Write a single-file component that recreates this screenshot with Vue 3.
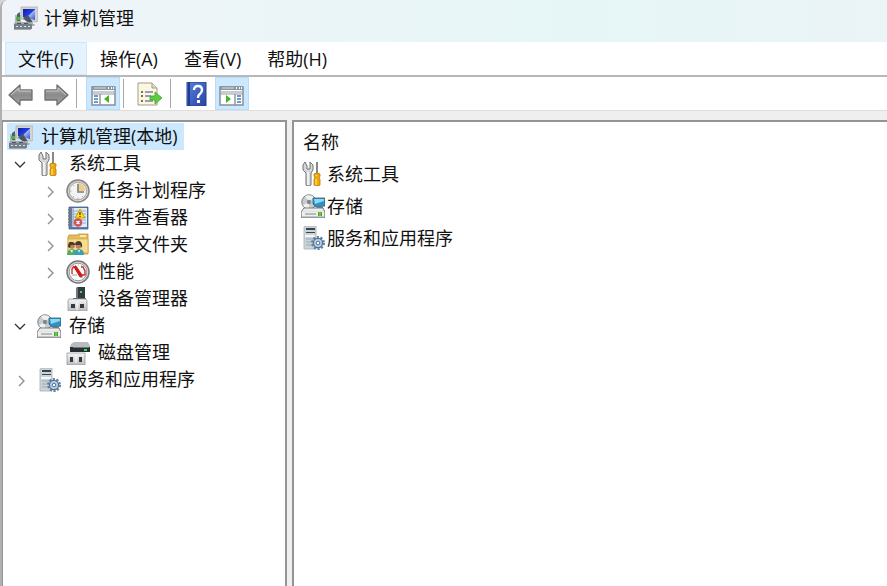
<template>
  <svg class="sprite" aria-hidden="true">
    <defs>
      <linearGradient id="g-screen" x1="0" y1="0" x2="1" y2="1">
        <stop offset="0" stop-color="#0a1ea8" />
        <stop offset="0.5" stop-color="#2440e0" />
        <stop offset="0.55" stop-color="#9fb4fa" />
        <stop offset="1" stop-color="#3450d8" />
      </linearGradient>
      <linearGradient id="g-metal" x1="0" y1="0" x2="0" y2="1">
        <stop offset="0" stop-color="#f6f6f6" />
        <stop offset="1" stop-color="#b9bcc0" />
      </linearGradient>
      <linearGradient id="g-arrow" x1="0" y1="0" x2="0" y2="1">
        <stop offset="0" stop-color="#b4b4b4" />
        <stop offset="0.5" stop-color="#8a8a8a" />
        <stop offset="1" stop-color="#a6a6a6" />
      </linearGradient>
      <linearGradient id="g-help" x1="0" y1="0" x2="1" y2="1">
        <stop offset="0" stop-color="#5c80dc" />
        <stop offset="1" stop-color="#2444a6" />
      </linearGradient>
    </defs>

    <symbol id="computer" viewBox="0 0 24 24">
      <path d="M1 9h6v8H1z" fill="#b5b9bd" />
      <path d="M3 8l3-2v9H3z" fill="#53606a" />
      <path d="M2 11h4v3H2z" fill="#4fb43c" />
      <path d="M7 1h17v14l-2 1-15-3z" fill="#d4d4cf" stroke="#aaa9a4" stroke-width=".7" />
      <path d="M9 3h12v11L9 11z" fill="url(#g-screen)" />
      <path d="M9 12l5-3 4 6v4l-6-4z" fill="#4b5663" />
      <path d="M16 16h3v2h2l-1 2h-5z" fill="#a8aaac" />
      <path d="M1 16h14l2 2v6H0v-6z" fill="#a2a7ab" />
      <path d="M0 18h18v5H0z" fill="#757f87" />
      <path d="M2 20h2v1H2zM6 20h2v1H6zM10 20h2v1h-2zM14 20h2v1h-2z" fill="#dfe4e7" />
      <path d="M3 17h4v1H3zM10 17h4v1h-4z" fill="#4d565d" />
    </symbol>

    <symbol id="tools" viewBox="0 0 24 24">
      <path d="M4 0L6 4v3h3V3l0-3 3 3v5l-2 3v12l-2 1H6l-1-1V11L2 8V3z" fill="#d5d7d8" stroke="#6e7275" stroke-width="1" />
      <path d="M7 10v13" stroke="#fafafa" stroke-width="1.500" />
      <path d="M16 0v11" stroke="#85898c" stroke-width="2" />
      <path d="M13 12q3-2 6 0v2l-1 2 1 1v6q-3 2-6 0v-6l1-1-1-2z" fill="#f0a90e" stroke="#b87503" stroke-width=".8" />
      <path d="M15 13v1M15 17v6" stroke="#ffe26b" stroke-width="1.200" />
    </symbol>

    <symbol id="clock" viewBox="0 0 24 24">
      <circle cx="12" cy="12" r="11" fill="#d3d3d3" stroke="#858585" stroke-width="1.500" />
      <circle cx="12" cy="12" r="8.700" fill="#f3f3f1" stroke="#a9a9a9" />
      <path d="M12 12V4a8 8 0 0 1 7.500 8z" fill="#f2cc8c" />
      <path d="M12 5v8h6" fill="none" stroke="#777d83" stroke-width="1.600" />
      <path d="M12 20v-1.500M4 12h1.500M7 6l1 1M7 18l1-1M17 18l-1-1" stroke="#aaa" />
    </symbol>

    <symbol id="event" viewBox="0 0 24 24">
      <path d="M3 1h19v22H3z" fill="#5f7fb2" stroke="#35517f" stroke-width=".7" />
      <path d="M6 2h15v19H6z" fill="#dfe9f5" />
      <path d="M7 5h13M7 8h13M7 11h13M7 14h13M7 17h13" stroke="#8aa7ce" stroke-width=".9" />
      <path d="M7 2v19" stroke="#7891b4" />
      <path d="M2 4h4M2 7h4M2 10h4M2 13h4M2 16h4M2 19h4" stroke="#727980" stroke-width="1.300" />
      <path d="M14 3l5 9H9z" fill="#ffd91c" stroke="#b99500" stroke-width=".8" />
      <path d="M14 6v3M14 10v1" stroke="#493d00" stroke-width="1.300" />
      <circle cx="12" cy="16.500" r="4" fill="#db4a4d" stroke="#c0626a" stroke-width=".6" />
      <path d="M10.500 15l3 3M13.500 15l-3 3" stroke="#fff" stroke-width="1.300" />
    </symbol>

    <symbol id="share" viewBox="0 0 24 24">
      <path d="M2 4l1-2h8l2-1h9v20H2z" fill="#e4bd59" stroke="#bd9237" stroke-width=".8" />
      <path d="M14 3h6" stroke="#fff8d6" stroke-width="1.500" />
      <path d="M2 6h20v14H2z" fill="#f7dc8c" stroke="#d0a54b" stroke-width=".7" />
      <path d="M1 22q0-6 5-6t5 6z" fill="#55ad5f" />
      <path d="M8 22q0-6 5-6t5 6z" fill="#3e9fb3" />
      <circle cx="6" cy="13" r="2.800" fill="#bd8157" />
      <circle cx="12.500" cy="13" r="2.800" fill="#bd8157" />
      <path d="M2 14q0-6 4-5 3 0 3 3-2 0-4 0-1 1-1 3zM9 12q0-4 4-4 4 1 3 7-1-2-2-3-2 0-4 0z" fill="#4b3a2d" />
      <path d="M4 17l2 3 1-3M12 17l1 3 1-3" fill="#ecf4f4" />
    </symbol>

    <symbol id="perf" viewBox="0 0 24 24">
      <circle cx="12" cy="12" r="11" fill="#dadada" stroke="#777" stroke-width="1.500" />
      <circle cx="12" cy="12" r="8.800" fill="#fff" stroke="#999" />
      <path d="M9 6q4-2 7 0" fill="none" stroke="#7b8a8a" stroke-dasharray="1 2" />
      <path d="M6 14V9l2-3M15 7h2l2 4v4h-3" fill="none" stroke="#d42b2b" stroke-width="1.400" />
      <path d="M8 7l2-1 6 9v2h-2z" fill="#cf1818" stroke="#cf1818" />
      <path d="M6 15h5M15 17h2" stroke="#9aa4a4" />
    </symbol>

    <symbol id="device" viewBox="0 0 24 24">
      <path d="M10 1l2-1h7v13h-9z" fill="#343a3f" />
      <path d="M10 1l2-1v13h-2z" fill="#727679" />
      <path d="M14 4h2v2h-2z" fill="#31df58" />
      <path d="M7 11h13v3H7z" fill="#505457" />
      <path d="M3 12h17l1 2v10H2V14z" fill="url(#g-metal)" stroke="#9a9a9a" stroke-width=".8" />
      <path d="M5 17h4v4H5zM14 17h4v4h-4z" fill="#373a3d" />
      <path d="M11 15v8" stroke="#fff" />
    </symbol>

    <symbol id="storage" viewBox="0 0 24 24">
      <circle cx="8" cy="8" r="7.200" fill="#c6cccd" stroke="#777e81" />
      <path d="M8 8L4 2q5-2 9 1zM8 8l-6 3q2 4 6 4z" fill="#eff1f1" />
      <circle cx="8" cy="8" r="2.200" fill="#80898c" />
      <path d="M12 4h12v8l-9 1-3-3z" fill="#318fc1" stroke="#27647f" stroke-width=".8" />
      <path d="M13 5h10v2l-9 3z" fill="#8ed6f2" />
      <path d="M16 13h6v2h-6z" fill="#777" />
      <path d="M3 14h19l2 4v6H0v-6z" fill="url(#g-metal)" stroke="#74787b" stroke-width="1" />
      <path d="M1 18h22v4H1z" fill="#eeeeec" />
      <path d="M4 20h11" stroke="#b7b9ba" stroke-width="2" />
      <path d="M17 18h4v4h-4z" fill="#4ba62b" />
      <path d="M19 18v4" stroke="#9ddf5e" />
    </symbol>

    <symbol id="disk" viewBox="0 0 24 24">
      <path d="M5 3l3-2h14l2 4v5H4V6z" fill="#b9bcbe" />
      <path d="M4 6h20v5H4z" fill="#292e32" />
      <path d="M7 6h16v1H7z" fill="#71767a" />
      <path d="M18 8h3v2h-3z" fill="#39dc55" />
      <path d="M1 12h18v12H1z" fill="url(#g-metal)" stroke="#999" stroke-width=".8" />
      <path d="M4 16h3v5H4zM13 16h3v5h-3z" fill="#363a3d" />
      <path d="M10 14v8" stroke="#fff" />
    </symbol>

    <symbol id="services" viewBox="0 0 24 24">
      <path d="M3 1l2-1h10v23H3z" fill="#ccd4da" stroke="#a5afb6" stroke-width=".8" />
      <path d="M5 2h9v2H5zM5 6h9v1H5z" fill="#38444c" />
      <path d="M4 9h10v2H4z" fill="#f3f6f8" />
      <path d="M5 13h8M5 16h5M5 19h5" stroke="#97a5ae" />
      <circle cx="17" cy="17" r="5.500" fill="none" stroke="#61829f" stroke-width="3" stroke-dasharray="2 1.450" />
      <circle cx="17" cy="17" r="4.600" fill="#b9d0e4" stroke="#507494" stroke-width="1.300" />
      <circle cx="17" cy="17" r="1.800" fill="#fff" stroke="#507494" />
    </symbol>

    <symbol id="back" viewBox="0 0 26 24">
      <path d="M1 13L12 3v5h12v10H12v5z" fill="url(#g-arrow)" stroke="#6f6f6f" stroke-width="1.300" stroke-linejoin="round" />
      <path d="M3 13l8-7v3h12" fill="none" stroke="#c8c8c8" />
    </symbol>

    <symbol id="forward" viewBox="0 0 26 24">
      <path d="M25 13L14 3v5H2v10h12v5z" fill="url(#g-arrow)" stroke="#6f6f6f" stroke-width="1.300" stroke-linejoin="round" />
      <path d="M23 13l-8-7v3H3" fill="none" stroke="#c8c8c8" />
    </symbol>

    <symbol id="panel-left" viewBox="0 0 26 24">
      <path d="M2 5h23v18H2z" fill="#fff" stroke="#86909a" stroke-width="1.500" />
      <path d="M2 4h23v4H2z" fill="#8c969f" />
      <path d="M4 6h12" stroke="#d8dde1" />
      <path d="M18 6h1M21 6h1M23 6h1" stroke="#fff" stroke-width="2" />
      <path d="M3 10h21" stroke="#c6ccd1" stroke-width="2" />
      <path d="M10 12v11" stroke="#8f99a2" stroke-width="1.500" />
      <path d="M2 12h23" stroke="#8f99a2" />
      <path d="M4 14h4M4 17h4M4 20h4" stroke="#4279b7" stroke-width="1.500" />
      <path d="M19 13v8l-5-4z" fill="#42b52d" />
    </symbol>

    <symbol id="panel-right" viewBox="0 0 26 24">
      <path d="M1 5h23v18H1z" fill="#fff" stroke="#86909a" stroke-width="1.500" />
      <path d="M1 4h23v4H1z" fill="#8c969f" />
      <path d="M3 6h12" stroke="#d8dde1" />
      <path d="M17 6h1M20 6h1M22 6h1" stroke="#fff" stroke-width="2" />
      <path d="M2 10h21" stroke="#c6ccd1" stroke-width="2" />
      <path d="M16 12v11" stroke="#8f99a2" stroke-width="1.500" />
      <path d="M1 12h23" stroke="#8f99a2" />
      <path d="M18 14h4M18 17h4M18 20h4" stroke="#4279b7" stroke-width="1.500" />
      <path d="M7 13v8l5-4z" fill="#42b52d" />
    </symbol>

    <symbol id="export" viewBox="0 0 26 24">
      <path d="M1 1h14l5 5v17H1z" fill="#fbf8df" stroke="#a19d88" />
      <path d="M15 1v5h5" fill="#e5dfbd" stroke="#a19d88" />
      <path d="M4 10h2M4 14h2M4 19h2" stroke="#444" stroke-width="1.600" />
      <path d="M8 10h8M8 14h6M8 19h8" stroke="#807caa" stroke-width="1.300" />
      <path d="M13 14h5v-4l7 6-7 6v-4h-5z" fill="#5ecb42" stroke="#3fa72d" stroke-width=".8" />
    </symbol>

    <symbol id="help" viewBox="0 0 26 24">
      <path d="M3 0h19v24H3z" fill="url(#g-help)" stroke="#27408e" />
      <path d="M5 0v24" stroke="#203c91" stroke-width="2" />
      <path d="M10 8q0-4 4-4t4 4q0 2-2 4-2 1-2 4" fill="none" stroke="#fff" stroke-width="2.400" />
      <path d="M13 18h3v3h-3z" fill="#fff" />
    </symbol>
  </svg>

  <div class="window">
    <header class="titlebar">
      <svg class="icon"><use href="#computer" /></svg>
      <h1>计算机管理</h1>
    </header>

    <nav class="menubar">
      <button v-for="(m, i) in menus" :key="m" type="button" :class="{ active: i === activeMenu }" @click="activeMenu = i">{{ m }}</button>
    </nav>

    <div class="toolbar" role="toolbar">
      <template v-for="(t, i) in tools" :key="i">
        <span v-if="t.sep" class="sep"></span>
        <button v-else type="button" :class="{ pressed: t.pressed }" :aria-label="t.label">
          <svg class="tool-icon"><use :href="'#' + t.icon" /></svg>
        </button>
      </template>
    </div>

    <main class="panes">
      <ul class="tree" role="tree">
        <li
          v-for="n in visibleNodes"
          :key="n.id"
          role="treeitem"
          :class="['node', 'level-' + n.level, { selected: n.id === selected }]"
          @click="selected = n.id"
        >
          <button
            v-if="n.toggle"
            type="button"
            :class="['toggle', { open: open[n.id] }]"
            :aria-label="n.text"
            @click.stop="open[n.id] = !open[n.id]"
          >
            <svg class="chevron" viewBox="0 0 16 16"><path d="M6 4l5 5-5 5" /></svg>
          </button>
          <span v-else-if="n.level" class="toggle"></span>
          <svg class="icon"><use :href="'#' + n.icon" /></svg>
          <span>{{ n.text }}</span>
        </li>
      </ul>

      <table class="list">
        <thead>
          <tr><th scope="col">名称</th></tr>
        </thead>
        <tbody>
          <tr v-for="item in items" :key="item.text">
            <td>
              <div class="item">
                <svg class="icon"><use :href="'#' + item.icon" /></svg>
                <span>{{ item.text }}</span>
              </div>
            </td>
          </tr>
        </tbody>
      </table>
    </main>
  </div>
</template>

<script setup>
import { ref, reactive, computed } from "vue";

const menus = ["文件(F)", "操作(A)", "查看(V)", "帮助(H)"];
const activeMenu = ref(0);

const tools = [
  { icon: "back", label: "后退" },
  { icon: "forward", label: "前进" },
  { sep: true },
  { icon: "panel-left", label: "显示/隐藏控制台树", pressed: true },
  { sep: true },
  { icon: "export", label: "导出列表" },
  { sep: true },
  { icon: "help", label: "帮助" },
  { icon: "panel-right", label: "显示/隐藏操作窗格", pressed: true },
];

const nodes = [
  { id: "root", level: 0, icon: "computer", text: "计算机管理(本地)" },
  { id: "system", level: 1, icon: "tools", text: "系统工具", toggle: true },
  { id: "task", level: 2, parent: "system", icon: "clock", text: "任务计划程序", toggle: true },
  { id: "event", level: 2, parent: "system", icon: "event", text: "事件查看器", toggle: true },
  { id: "share", level: 2, parent: "system", icon: "share", text: "共享文件夹", toggle: true },
  { id: "perf", level: 2, parent: "system", icon: "perf", text: "性能", toggle: true },
  { id: "device", level: 2, parent: "system", icon: "device", text: "设备管理器" },
  { id: "storage", level: 1, icon: "storage", text: "存储", toggle: true },
  { id: "disk", level: 2, parent: "storage", icon: "disk", text: "磁盘管理" },
  { id: "services", level: 1, icon: "services", text: "服务和应用程序", toggle: true },
];

const selected = ref("root");
const open = reactive({ system: true, storage: true });

// Solo los nodos cuyo padre está abierto
const visibleNodes = computed(() => nodes.filter((n) => !n.parent || open[n.parent]));

const items = [
  { icon: "tools", text: "系统工具" },
  { icon: "storage", text: "存储" },
  { icon: "services", text: "服务和应用程序" },
];
</script>

<style>
body {
  background: #d9d3d8;
}
</style>

<style scoped>
.sprite {
  position: absolute;
  width: 0;
  height: 0;
}

.window {
  display: flex;
  flex-direction: column;
  box-sizing: border-box;
  min-height: 100vh;
  border-left: 2px solid #b0b0b0;
  border-top-left-radius: 8px;
  overflow: hidden;
  background: #efefef;
  color: #111;
  font-family: "Open Sans", "Noto Sans CJK SC", sans-serif;
  font-size: 18px;
  line-height: 27px;
}

button {
  padding: 0;
  border: 0;
  background: none;
  color: inherit;
  font: inherit;
}

.icon {
  flex: none;
  width: 24px;
  height: 24px;
}

.titlebar {
  display: flex;
  align-items: center;
  gap: 6px;
  height: 36px;
  padding: 0 12px 6px;
  background: linear-gradient(90deg, #f0f4f9, #e6f6f6 65%, #ebf4f7);
}

h1 {
  margin: 0;
  font-size: 18px;
  font-weight: 400;
}

.menubar {
  display: flex;
  height: 33px;
  padding-left: 3px;
  border-bottom: 2px solid #b8b8b8;
  background: #fff;
}

.menubar button {
  padding: 1px 12px 0;
  border: 1px solid transparent;
}

.menubar .active {
  border-color: #cce8ff;
  background: #e5f3ff;
}

.toolbar {
  display: flex;
  height: 33px;
  padding-left: 2px;
  border-bottom: 1px solid #dedede;
  background: #fff;
}

.toolbar button {
  display: flex;
  align-items: center;
  justify-content: center;
  box-sizing: border-box;
  width: 34px;
  margin-right: 1px;
  border: 1px solid transparent;
}

.toolbar .pressed {
  border-color: #b4dcfb;
  background: #cce8ff;
}

.tool-icon {
  width: 26px;
  height: 24px;
}

.sep {
  width: 1px;
  margin: 2px 9px 2px 2px;
  background: #a8a8a8;
}

.panes {
  display: flex;
  flex: 1;
  gap: 5px;
  padding-top: 9px;
}

.tree {
  flex: none;
  box-sizing: border-box;
  width: 285px;
  margin: 0;
  padding: 1px 4px;
  border: 2px solid #949494;
  border-left-width: 1px;
  border-bottom: 0;
  background: #fff;
  list-style: none;
}

.node {
  display: flex;
  align-items: center;
  gap: 8px;
  width: fit-content;
  height: 27px;
  padding-right: 6px;
}

.level-0 {
  padding-left: 2px;
}

.level-1 {
  padding-left: 6px;
}

.level-2 {
  padding-left: 35px;
}

.selected {
  background: #cce8ff;
}

.toggle {
  flex: none;
  width: 16px;
  height: 16px;
}

.chevron {
  display: block;
  width: 16px;
  height: 16px;
  fill: none;
  stroke: #8c8c8c;
  stroke-width: 1.3;
}

.open .chevron {
  stroke: #333;
  transform: rotate(90deg);
}

.list {
  flex: 1;
  display: block;
  border-top: 2px solid #949494;
  border-left: 2px solid #949494;
  border-spacing: 0;
  padding: 4px 7px;
  background: #fff;
}

.list th,
.list td {
  height: 32px;
  padding: 0;
  text-align: left;
  font-weight: 400;
}

.list th {
  padding-left: 2px;
}

.item {
  display: flex;
  align-items: center;
  gap: 2px;
}
</style>
